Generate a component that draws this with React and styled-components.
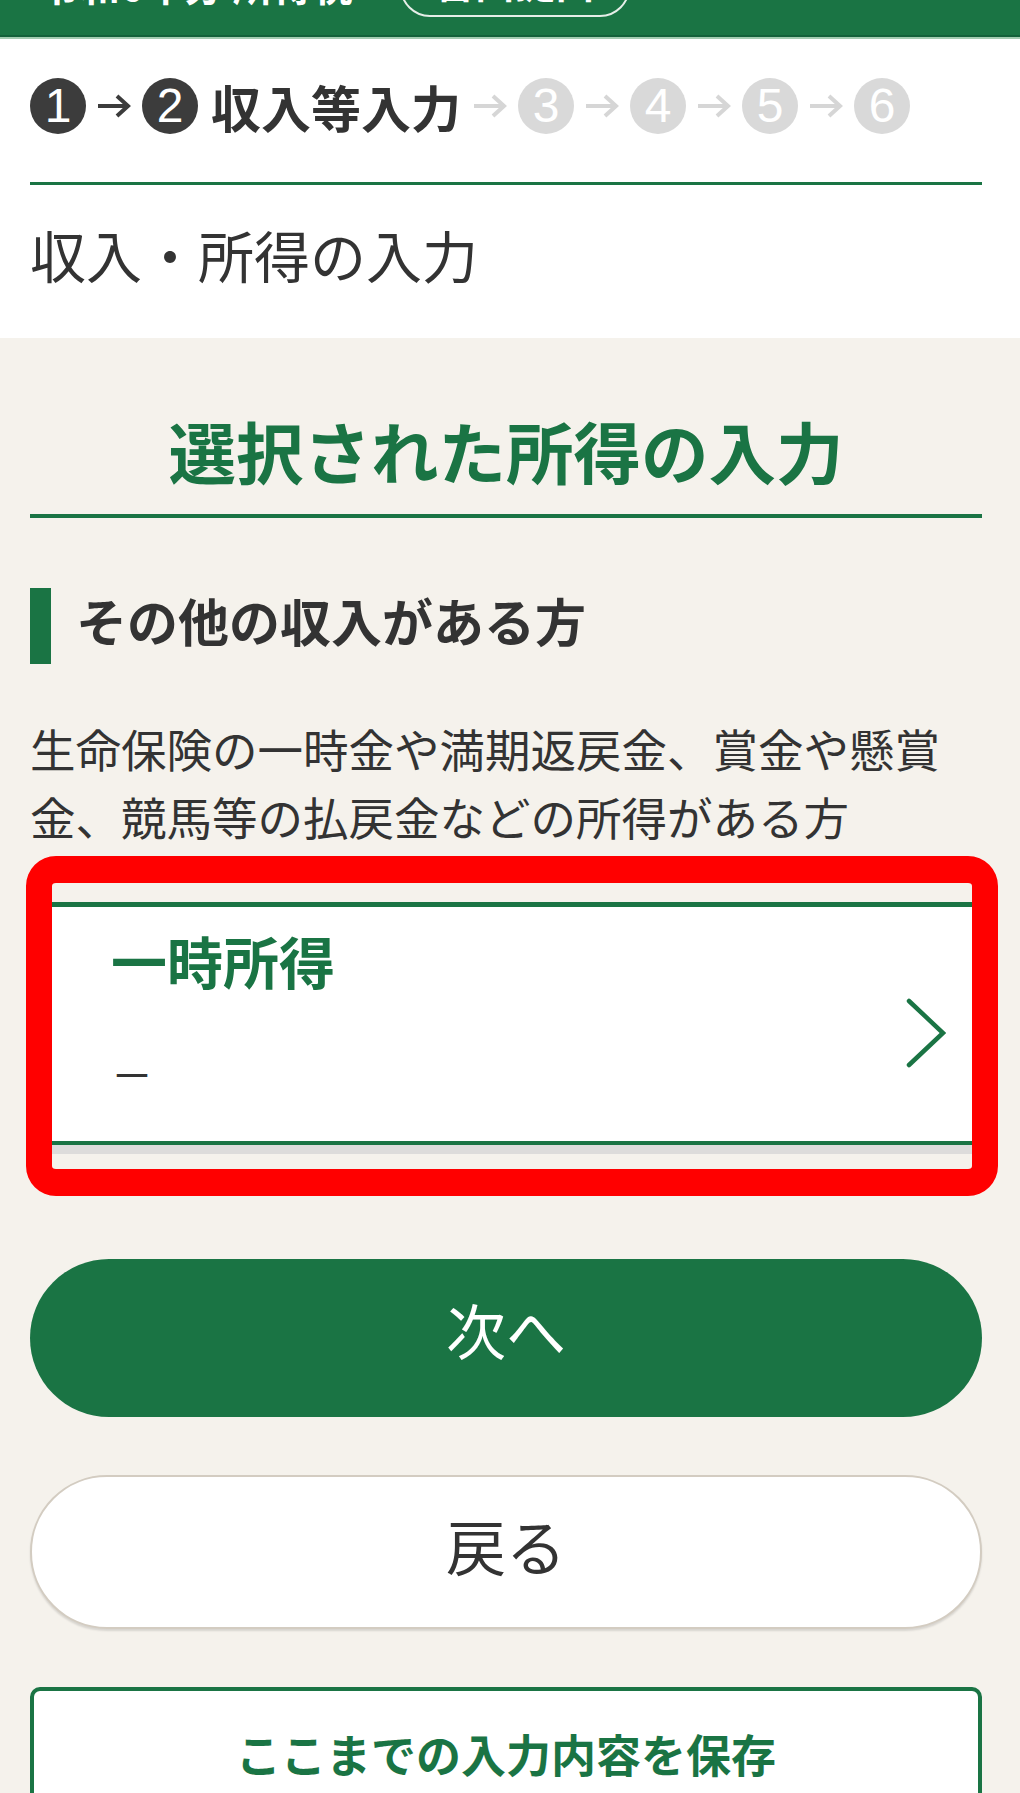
import React from "react";
import styled, { createGlobalStyle } from "styled-components";

const GREEN = "#1a7444";
const TEXT = "#333333";
const FONT = '"Noto Sans CJK JP", "Noto Sans", sans-serif';

const GlobalStyle = createGlobalStyle`
  html, body { margin: 0; padding: 0; }
  body {
    background: #f5f2ec;
    font-family: ${FONT};
    color: ${TEXT};
  }
`;

/* 上部のグリーンバー（画面外に切れている） */
const TopBar = styled.header`
  height: 39px;
  display: flex;
  align-items: flex-end;
  gap: 47px;
  padding: 0 40px;
  overflow: hidden;
  background: linear-gradient(to bottom, ${GREEN} 0 35px, #13613a 35px 37px, #a3ccb1 37px 39px);
`;

const BarTitle = styled.span`
  color: #fff;
  font-size: 40px;
  font-weight: 700;
  line-height: 40px;
  margin-bottom: 35px;
  white-space: nowrap;
`;

const BarPill = styled.span`
  display: flex;
  align-items: center;
  justify-content: center;
  box-sizing: border-box;
  width: 230px;
  height: 62px;
  margin-bottom: 22px;
  padding-bottom: 10px;
  border: 2px solid #e6eee8;
  border-radius: 30px;
  color: #fff;
  font-size: 40px;
  font-weight: 700;
  line-height: 1;
  white-space: nowrap;
`;

const Intro = styled.section`
  background: #fff;
  padding: 39px 38px 45px 30px;
`;

const Steps = styled.div`
  display: flex;
  align-items: center;
  padding-bottom: 48px;
  border-bottom: 3px solid ${GREEN};
`;

const StepDot = styled.span`
  flex: none;
  width: 56px;
  height: 56px;
  border-radius: 50%;
  display: flex;
  align-items: center;
  justify-content: center;
  background: ${p => (p.$done ? "#3c3c3c" : "#d9d9d9")};
  color: #fff;
  font-family: "Liberation Sans", sans-serif;
  font-size: 48px;
  line-height: 1;
`;

const StepArrow = styled.svg`
  flex: none;
  width: 36px;
  height: 28px;
  margin: 0 10px;
  color: ${p => (p.$done ? "#3c3c3c" : "#d6d6d6")};
`;

const StepLabel = styled.span`
  font-size: 50px;
  font-weight: 700;
  line-height: 56px;
  margin: 0 1px 0 13px;
  white-space: nowrap;
`;

const PageTitle = styled.h1`
  margin: 30px 0 0;
  font-size: 56px;
  font-weight: 400;
  line-height: 78px;
  color: ${TEXT};
`;

const Main = styled.main`
  padding: 66px 38px 0 30px;
  background: #f5f2ec;
`;

const SectionTitle = styled.h2`
  margin: 0;
  padding-bottom: 18px;
  border-bottom: 4px solid ${GREEN};
  text-align: center;
  color: ${GREEN};
  font-size: 67.5px;
  font-weight: 700;
  line-height: 92px;
`;

const GroupHeading = styled.h3`
  margin: 70px 0 0;
  border-left: 21px solid ${GREEN};
  padding: 0 0 12px 25px;
  font-size: 51px;
  font-weight: 700;
  line-height: 64px;
  color: ${TEXT};
`;

const Lead = styled.p`
  margin: 51px 0 0;
  font-size: 45.5px;
  line-height: 67.5px;
  color: ${TEXT};
`;

/* 赤い注目枠 */
const Highlight = styled.div`
  margin: 6px -16px 0 -4px;
  border-style: solid;
  border-color: #ff0000;
  border-width: 27px 26px;
  border-radius: 30px;
  padding: 19px 0 24px;
  background: #f5f2ec;
`;

const IncomeCard = styled.div`
  display: flex;
  align-items: center;
  justify-content: space-between;
  padding: 0 26px 0 59px;
  background: #fff;
  border-top: 5px solid ${GREEN};
  border-bottom: 4px solid ${GREEN};
  box-shadow: 0 9px 0 #dddcdb;
`;

const CardText = styled.div`
  padding: 16px 0 38px;
`;

const CardLabel = styled.div`
  color: ${GREEN};
  font-size: 56px;
  font-weight: 700;
  line-height: 73px;
`;

const CardValue = styled.div`
  margin-top: 47px;
  font-size: 42px;
  line-height: 60px;
  color: ${TEXT};
`;

const Chevron = styled.svg`
  flex: none;
  width: 40px;
  height: 70px;
  margin-top: 17px;
`;

const ButtonStack = styled.div`
  display: flex;
  flex-direction: column;
  gap: 58px;
  margin-top: 63px;
`;

const PillButton = styled.button`
  display: flex;
  align-items: center;
  justify-content: center;
  box-sizing: border-box;
  width: 100%;
  height: ${p => (p.$primary ? "158px" : "154px")};
  padding: 0 0 ${p => (p.$primary ? "19px" : "15px")};
  border: ${p => (p.$primary ? "none" : "2px solid #d3ccc1")};
  border-radius: 80px;
  background: ${p => (p.$primary ? GREEN : "#fff")};
  color: ${p => (p.$primary ? "#fff" : TEXT)};
  box-shadow: ${p => (p.$primary ? "none" : "0 2px 2px rgba(0, 0, 0, 0.12)")};
  font-family: ${FONT};
  font-size: 60px;
  line-height: 1;
  cursor: pointer;
`;

const SaveButton = styled.button`
  display: block;
  box-sizing: border-box;
  width: 100%;
  padding: 31px 0 40px;
  border: 4px solid ${GREEN};
  border-radius: 10px;
  background: #fff;
  color: ${GREEN};
  font-family: ${FONT};
  font-size: 45px;
  font-weight: 700;
  line-height: 64px;
  cursor: pointer;
`;

const Arrow = ({ done }) => (
  <StepArrow $done={done} viewBox="0 0 36 28" fill="none">
    <path d="M2 14H32M21 4L32 14L21 24" stroke="currentColor" strokeWidth="4" />
  </StepArrow>
);

const App = () => {
  return (
    <>
      <GlobalStyle />
      <TopBar>
        <BarTitle>令和6年分 所得税</BarTitle>
        <BarPill>書面提出</BarPill>
      </TopBar>

      <Intro>
        <Steps>
          <StepDot $done>1</StepDot>
          <Arrow done />
          <StepDot $done>2</StepDot>
          <StepLabel>収入等入力</StepLabel>
          {[3, 4, 5, 6].map(n => (
            <React.Fragment key={n}>
              <Arrow />
              <StepDot>{n}</StepDot>
            </React.Fragment>
          ))}
        </Steps>
        <PageTitle>収入・所得の入力</PageTitle>
      </Intro>

      <Main>
        <SectionTitle>選択された所得の入力</SectionTitle>
        <GroupHeading>その他の収入がある方</GroupHeading>
        <Lead>生命保険の一時金や満期返戻金、賞金や懸賞金、競馬等の払戻金などの所得がある方</Lead>

        <Highlight>
          <IncomeCard>
            <CardText>
              <CardLabel>一時所得</CardLabel>
              <CardValue>－</CardValue>
            </CardText>
            <Chevron viewBox="0 0 40 70" fill="none">
              <path d="M3 3L37 35L3 67" stroke={GREEN} strokeWidth="4.5" strokeLinecap="round" strokeLinejoin="miter" />
            </Chevron>
          </IncomeCard>
        </Highlight>

        <ButtonStack>
          <PillButton $primary>次へ</PillButton>
          <PillButton>戻る</PillButton>
          <SaveButton>ここまでの入力内容を保存</SaveButton>
        </ButtonStack>
      </Main>
    </>
  );
};

export default App;
